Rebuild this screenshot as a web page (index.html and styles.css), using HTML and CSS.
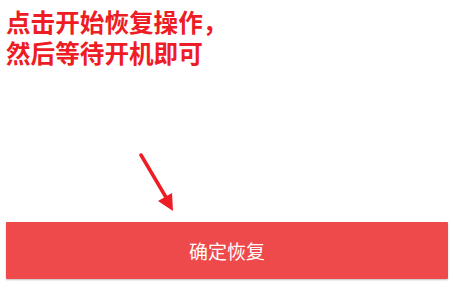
FILE: index.html
```html
<!DOCTYPE html>
<html lang="zh-CN">
<head>
    <meta charset="UTF-8">
    <meta name="viewport" content="width=device-width, initial-scale=1.0">
    <title>确定恢复</title>
    <link rel="stylesheet" href="styles.css">
</head>
<body>
    <div class="page">
        <div class="tip">
            <div>点击开始恢复操作，</div>
            <div>然后等待开机即可</div>
        </div>
        <div class="pointer">
            <svg width="44" height="64" viewBox="0 0 44 64">
                <line x1="3" y1="2" x2="29" y2="46" stroke="#ee1c25" stroke-width="3.5" stroke-linecap="round"/>
                <polygon points="35,58 20,48 34,40" fill="#ee1c25"/>
            </svg>
        </div>
        <button class="restore-btn">确定恢复</button>
    </div>
</body>
</html>
```

FILE: styles.css
```css
body {
    margin: 0;
    background: #fff;
    font-family: "Noto Sans CJK SC", "Noto Sans", sans-serif;
}
.page {
    display: flex;
    flex-direction: column;
    height: 290px;
    padding: 0 7px 0 6px;
    box-sizing: border-box;
}
.tip {
    padding-top: 6px;
    font-size: 24.6px;
    font-weight: bold;
    line-height: 31px;
    color: #ee1c25;
}
.pointer {
    flex: 1;
    padding: 85px 0 0 132px;
}
.pointer svg {
    display: block;
}
.restore-btn {
    height: 57px;
    margin-bottom: 11px;
    border: none;
    border-radius: 1px;
    background: #ee4a4b;
    color: #fff;
    font-family: inherit;
    font-size: 19px;
    box-shadow: 0 1px 2px rgba(0, 0, 0, 0.25);
}
```
